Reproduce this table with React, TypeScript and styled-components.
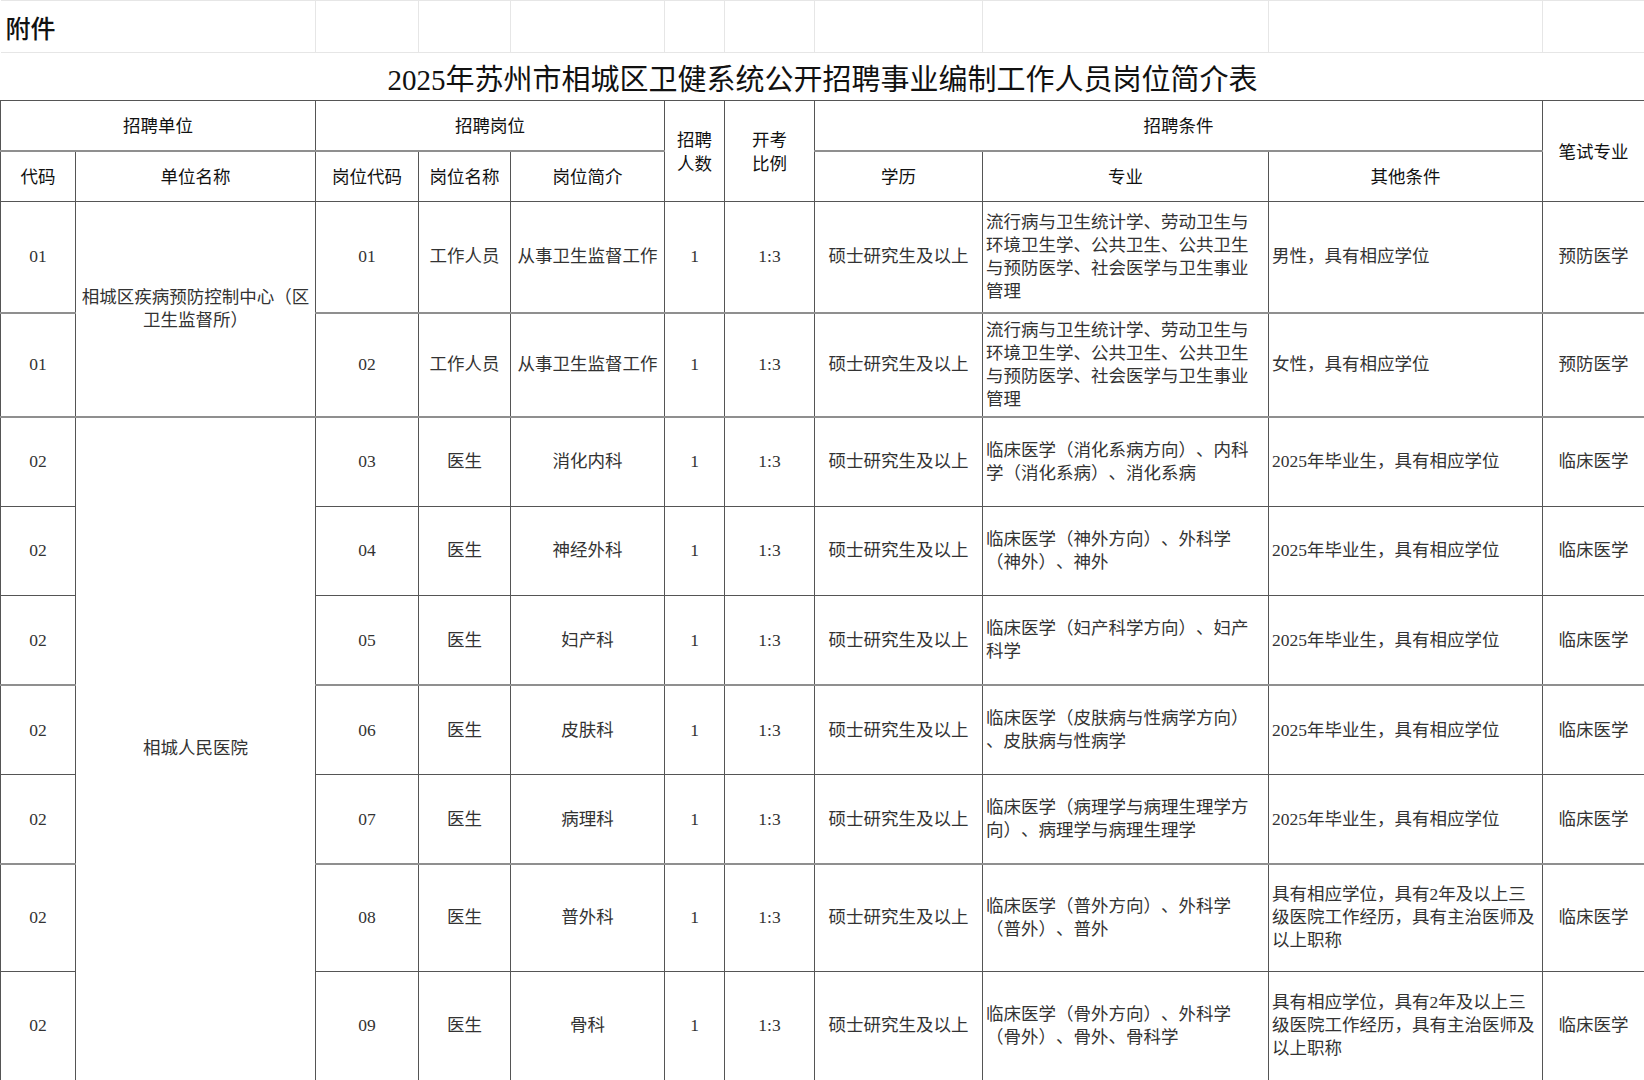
import React from 'react';
import styled, { createGlobalStyle, css } from 'styled-components';

const Global = createGlobalStyle`
  html, body { margin: 0; padding: 0; background: #ffffff; }
  body {
    font-family: "Liberation Serif", "Noto Sans CJK SC", serif;
    color: #222;
    text-spacing-trim: space-all;
  }
`;

const COLS = [75, 240, 103, 92, 154, 60, 90, 168, 286, 274, 102];

const LINE = '#555555';
const SOFT = '#8f8f8f';
const GRID = '#e6e6e6';

const Sheet = styled.table`
  width: 1644px;
  table-layout: fixed;
  border-collapse: collapse;
  border-spacing: 0;
`;

const Row = styled.tr<{ $h: number; $soft?: boolean }>`
  height: ${(p) => p.$h}px;
  ${(p) =>
    p.$soft &&
    css`
      & > td,
      & > th {
        border-top: 2px solid ${SOFT};
      }
    `}
`;

const GridCell = styled.td`
  border: 1px solid ${GRID};
  padding: 0;
`;

const AttachCell = styled.td`
  border: 1px solid ${GRID};
  border-left: none;
  padding: 0 0 0 5px;
  font-family: "Noto Sans CJK SC", sans-serif;
  font-size: 25px;
  font-weight: 500;
  color: #111;
  text-align: left;
  vertical-align: middle;
`;

const TitleCell = styled.td`
  border-top: 1px solid ${GRID};
  border-left: none;
  border-right: none;
  border-bottom: 1px solid ${LINE};
  padding: 0;
  text-align: center;
  vertical-align: middle;
  font-family: "Liberation Serif", "Noto Sans CJK SC", serif;
  font-size: 29px;
  color: #111;
  white-space: nowrap;
`;

const HeadCell = styled.th`
  border: 1px solid ${LINE};
  padding: 0 2px;
  font-family: "Noto Sans CJK SC", sans-serif;
  font-weight: 400;
  font-size: 17.5px;
  line-height: 24px;
  color: #111;
  text-align: center;
  vertical-align: middle;
`;

const Cell = styled.td<{ $align?: 'left' | 'center' }>`
  border: 1px solid ${LINE};
  padding: 0 3px;
  font-family: "Liberation Serif", "Noto Sans CJK SC", serif;
  font-size: 17.5px;
  line-height: 23px;
  color: #333;
  text-align: ${(p) => p.$align ?? 'center'};
  vertical-align: middle;
  overflow: hidden;
`;

const Line = styled.span`
  display: block;
  white-space: nowrap;
`;

type Post = {
  unit: string;
  code: string;
  name: string;
  brief: string;
  major: string[];
  other: string[];
  exam: string;
  h: number;
  soft?: boolean;
};

const CDC_MAJOR = [
  '流行病与卫生统计学、劳动卫生与',
  '环境卫生学、公共卫生、公共卫生',
  '与预防医学、社会医学与卫生事业',
  '管理',
];

const HOSP_OTHER = ['2025年毕业生，具有相应学位'];
const SENIOR_OTHER = ['具有相应学位，具有2年及以上三', '级医院工作经历，具有主治医师及', '以上职称'];

const POSTS: Post[] = [
  { unit: '01', code: '01', name: '工作人员', brief: '从事卫生监督工作', major: CDC_MAJOR, other: ['男性，具有相应学位'], exam: '预防医学', h: 111 },
  { unit: '01', code: '02', name: '工作人员', brief: '从事卫生监督工作', major: CDC_MAJOR, other: ['女性，具有相应学位'], exam: '预防医学', h: 104, soft: true },
  { unit: '02', code: '03', name: '医生', brief: '消化内科', major: ['临床医学（消化系病方向）、内科', '学（消化系病）、消化系病'], other: HOSP_OTHER, exam: '临床医学', h: 89.5, soft: true },
  { unit: '02', code: '04', name: '医生', brief: '神经外科', major: ['临床医学（神外方向）、外科学', '（神外）、神外'], other: HOSP_OTHER, exam: '临床医学', h: 89.5 },
  { unit: '02', code: '05', name: '医生', brief: '妇产科', major: ['临床医学（妇产科学方向）、妇产', '科学'], other: HOSP_OTHER, exam: '临床医学', h: 89.5 },
  { unit: '02', code: '06', name: '医生', brief: '皮肤科', major: ['临床医学（皮肤病与性病学方向）', '、皮肤病与性病学'], other: HOSP_OTHER, exam: '临床医学', h: 89.5, soft: true },
  { unit: '02', code: '07', name: '医生', brief: '病理科', major: ['临床医学（病理学与病理生理学方', '向）、病理学与病理生理学'], other: HOSP_OTHER, exam: '临床医学', h: 89.5 },
  { unit: '02', code: '08', name: '医生', brief: '普外科', major: ['临床医学（普外方向）、外科学', '（普外）、普外'], other: SENIOR_OTHER, exam: '临床医学', h: 107, soft: true },
  { unit: '02', code: '09', name: '医生', brief: '骨科', major: ['临床医学（骨外方向）、外科学', '（骨外）、骨外、骨科学'], other: SENIOR_OTHER, exam: '临床医学', h: 109 },
];

const UNIT_SPANS: Record<number, { rows: number; lines: string[] }> = {
  0: { rows: 2, lines: ['相城区疾病预防控制中心（区', '卫生监督所）'] },
  2: { rows: 7, lines: ['相城人民医院'] },
};

const Lines = ({ items }: { items: string[] }) => (
  <>
    {items.map((t, i) => (
      <Line key={i}>{t}</Line>
    ))}
  </>
);

export default function App() {
  return (
    <>
      <Global />
      <Sheet>
        <colgroup>
          {COLS.map((w, i) => (
            <col key={i} style={{ width: w }} />
          ))}
        </colgroup>
        <tbody>
          <Row $h={52}>
            <AttachCell colSpan={2}>附件</AttachCell>
            {COLS.slice(2).map((_, i) => (
              <GridCell key={i} />
            ))}
          </Row>
          <Row $h={48}>
            <TitleCell colSpan={11}>2025年苏州市相城区卫健系统公开招聘事业编制工作人员岗位简介表</TitleCell>
          </Row>
          <Row $h={50}>
            <HeadCell colSpan={2}>招聘单位</HeadCell>
            <HeadCell colSpan={3}>招聘岗位</HeadCell>
            <HeadCell rowSpan={2}>
              <Lines items={['招聘', '人数']} />
            </HeadCell>
            <HeadCell rowSpan={2}>
              <Lines items={['开考', '比例']} />
            </HeadCell>
            <HeadCell colSpan={3}>招聘条件</HeadCell>
            <HeadCell rowSpan={2}>笔试专业</HeadCell>
          </Row>
          <Row $h={51} $soft>
            <HeadCell>代码</HeadCell>
            <HeadCell>单位名称</HeadCell>
            <HeadCell>岗位代码</HeadCell>
            <HeadCell>岗位名称</HeadCell>
            <HeadCell>岗位简介</HeadCell>
            <HeadCell>学历</HeadCell>
            <HeadCell>专业</HeadCell>
            <HeadCell>其他条件</HeadCell>
          </Row>
          {POSTS.map((p, i) => {
            const span = UNIT_SPANS[i];
            return (
              <Row key={p.code} $h={p.h} $soft={p.soft}>
                <Cell>{p.unit}</Cell>
                {span && (
                  <Cell rowSpan={span.rows}>
                    <Lines items={span.lines} />
                  </Cell>
                )}
                <Cell>{p.code}</Cell>
                <Cell>{p.name}</Cell>
                <Cell>{p.brief}</Cell>
                <Cell>1</Cell>
                <Cell>1:3</Cell>
                <Cell>硕士研究生及以上</Cell>
                <Cell $align="left">
                  <Lines items={p.major} />
                </Cell>
                <Cell $align="left">
                  <Lines items={p.other} />
                </Cell>
                <Cell>{p.exam}</Cell>
              </Row>
            );
          })}
        </tbody>
      </Sheet>
    </>
  );
}
